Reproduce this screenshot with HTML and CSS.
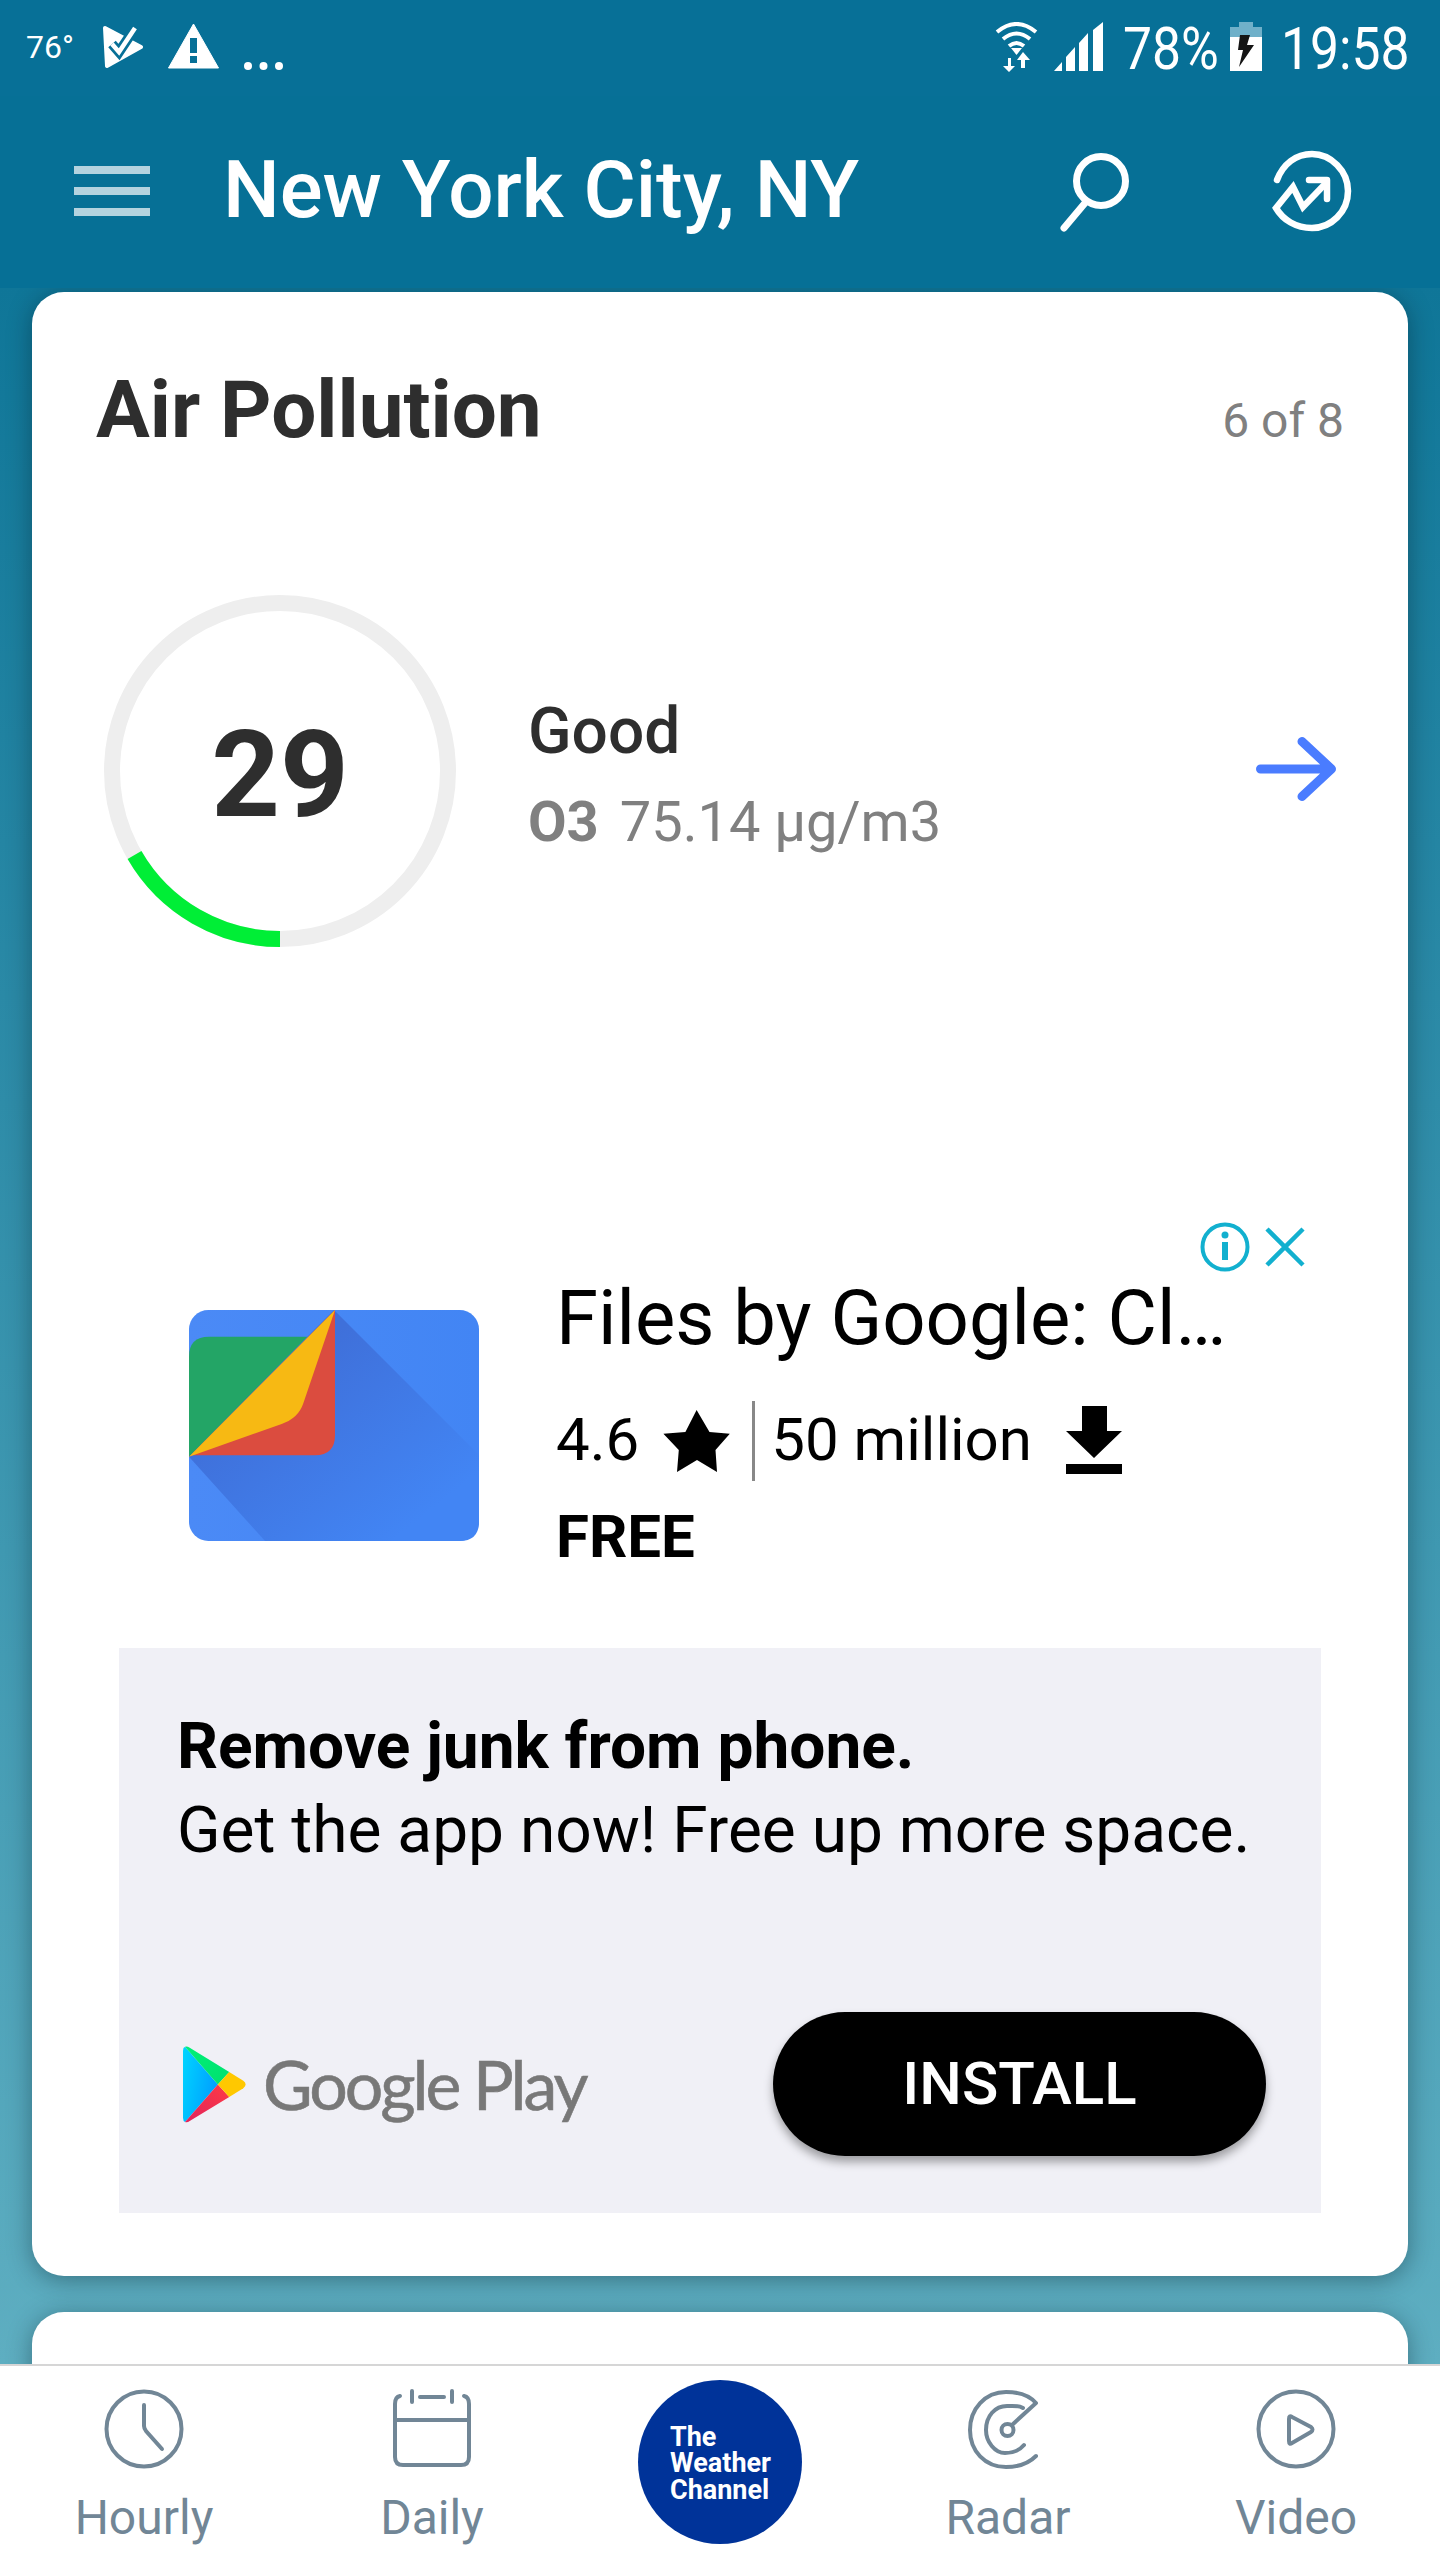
FILE: index.html
```html
<!DOCTYPE html>
<html lang="en">
<head>
<meta charset="utf-8">
<title>Air Pollution</title>
<link rel="stylesheet" href="styles.css">
</head>
<body>
<div class="app">
  <div class="statusbar">
    <div class="status-left">
      <span class="temp">76°</span>
      <svg class="ic-check" viewBox="103 24 41 46"><path d="M105 28 L141 47 L107 66 Z" fill="#fff" stroke="#fff" stroke-width="4" stroke-linejoin="round"/><path d="M112 44 L119 52 L135 28" fill="none" stroke="#077097" stroke-width="10"/><path d="M112 44 L119 52 L135 28" fill="none" stroke="#fff" stroke-width="4.500"/></svg>
      <svg class="ic-warn" viewBox="168 24 51 45"><path d="M193.500 24 L218.500 68 H168.500 Z" fill="#fff" stroke="#fff" stroke-width="1" stroke-linejoin="round"/><rect x="190" y="38" width="7" height="15" fill="#077097"/><rect x="190" y="56" width="7" height="7" fill="#077097"/></svg>
      <svg class="ic-dots" viewBox="242 60 42 12"><circle cx="247" cy="66" r="4" fill="#fff"/><circle cx="262.500" cy="66" r="4" fill="#fff"/><circle cx="278" cy="66" r="4" fill="#fff"/></svg>
    </div>
    <div class="status-right">
      <svg class="ic-wifi" viewBox="993 22 44 50"><g fill="none" stroke="#fff" stroke-width="4"><path d="M995 32 Q1014.500 16 1034 32"/><path d="M1001 39 Q1014.500 28 1028 39"/><path d="M1007 46 Q1014.500 40 1022 46"/></g><path d="M1014.500 55 L1009 48 H1020 Z" fill="#fff"/><path d="M1006 58 V66 H1001 L1007 72 L1013 66 H1009 V58 Z M1021 52 L1015 60 H1019 V68 H1023 V60 H1028 Z" fill="#fff"/></svg>
      <svg class="ic-signal" viewBox="1052 22 49 49"><path d="M1052 71 L1060 62 V71 Z M1064 71 V57 L1073 47 V71 Z M1077 71 V43 L1086 33 V71 Z M1091 71 V30 L1101 22 V71 Z" fill="#fff"/></svg>
      <span class="status-num pct">78%</span>
      <svg class="ic-batt" viewBox="1230 22 32 50"><path d="M1239 22 H1253 V27 H1262 V37 H1230 V27 H1239 Z" fill="#6fb0c9"/><rect x="1230" y="37" width="32" height="34" fill="#fff"/><path d="M1250 35 H1240 L1238 50 H1243 L1239 67 L1254 45 H1247 Z" fill="#151515"/></svg>
      <span class="status-num clock">19:58</span>
    </div>
  </div>
  <header class="topbar">
    <svg class="ic-menu" viewBox="74 165 76 52"><g fill="#b4d3df"><rect x="74" y="166" width="76" height="8"/><rect x="74" y="187" width="76" height="8"/><rect x="74" y="208" width="76" height="8"/></g></svg>
    <h1 class="city">New York City, NY</h1>
    <svg class="ic-search" viewBox="1058 150 74 84"><circle cx="1101" cy="181" r="24.500" fill="none" stroke="#fff" stroke-width="7"/><path d="M1085 203 L1064 228" fill="none" stroke="#fff" stroke-width="7" stroke-linecap="round"/></svg>
    <svg class="ic-trend" viewBox="1270 149 84 84"><path d="M1277 180 C1283 164 1296 154 1312 154 C1331 154 1348 171 1348 191 C1348 212 1331 228 1312 228 C1296 228 1283 220 1276 208 L1293 187 L1303 207 L1326 183" fill="none" stroke="#fff" stroke-width="6.500" stroke-linecap="round" stroke-linejoin="miter"/><path d="M1309 180 H1327 V199" fill="none" stroke="#fff" stroke-width="6.500" stroke-linecap="round" stroke-linejoin="round"/></svg>
  </header>
  <main class="scroller">
    <section class="card">
      <div class="card-head">
        <h2 class="card-title">Air Pollution</h2>
        <span class="card-count">6 of 8</span>
      </div>
      <div class="aqi">
        <div class="gauge">
          <svg class="gauge-ring" viewBox="0 0 352 352"><circle cx="176" cy="176" r="168" fill="none" stroke="#eeeeee" stroke-width="16"/><path d="M176 344 A168 168 0 0 1 30.500 260" fill="none" stroke="#00ee36" stroke-width="16"/></svg>
          <span class="gauge-value">29</span>
        </div>
        <div class="aqi-info">
          <div class="aqi-label">Good</div>
          <div class="aqi-detail"><b>O3</b><span>75.14 µg/m3</span></div>
        </div>
        <svg class="ic-arrow" viewBox="1256 733 86 72"><path d="M1260.500 769 H1331 M1302 741.500 L1331.500 769 L1302 796.500" fill="none" stroke="#4a7cff" stroke-width="9" stroke-linecap="round" stroke-linejoin="round"/></svg>
      </div>
      <div class="ad">
        <div class="ad-choices">
          <svg class="ic-info" viewBox="1201 1221 50 50"><circle cx="1226" cy="1246" r="22.500" fill="none" stroke="#12b0cf" stroke-width="4"/><circle cx="1226" cy="1234" r="3.500" fill="#12b0cf"/><rect x="1223" y="1241" width="6" height="18" fill="#12b0cf"/></svg>
          <svg class="ic-close" viewBox="1266 1226 40 40"><path d="M1268 1228 L1304 1264 M1304 1228 L1268 1264" fill="none" stroke="#12b0cf" stroke-width="4.500"/></svg>
        </div>
        <div class="ad-app">
          <svg class="app-icon" viewBox="117 330 870 693">
            <defs>
              <linearGradient id="sheet" x1="0" y1="0" x2="1" y2="0"><stop offset="0" stop-color="#4b8af6"/><stop offset="1" stop-color="#4285f4"/></linearGradient>
              <linearGradient id="fold" x1="0" y1="0" x2="1" y2="1"><stop offset="0.300" stop-color="#3f70da"/><stop offset="0.850" stop-color="#4285f4"/></linearGradient>
            </defs>
            <rect x="117" y="330" width="870" height="693" rx="58" fill="url(#sheet)"/>
            <path d="M552 330 L987 765 V965 Q987 1023 929 1023 H345 L117 770 V765 L552 330 Z" fill="url(#fold)"/>
            <path d="M117 770 V470 Q117 410 177 410 H472 Z" fill="#23a566"/>
            <path d="M117 770 L555 330 V706 Q555 766 495 766 H120 Z" fill="#db4c3f"/>
            <path d="M117 770 L555 330 L460 610 Q445 655 395 672 Z" fill="#f7b913"/>
          </svg>
          <div class="app-info">
            <div class="app-name">Files by Google: Cl…</div>
            <div class="app-stats">
              <span>4.6</span>
              <svg class="ic-star" viewBox="661 1406 69 65"><path d="M695.600 1407 L708.500 1429 L728.800 1430.700 L714.500 1447 L716 1469 L696 1457 L676 1469 L677.800 1447 L662.400 1430.700 L684.400 1429 Z" fill="#000"/></svg>
              <i class="stat-rule"></i>
              <span>50 million</span>
              <svg class="ic-download" viewBox="1066 1405 56 68"><path d="M1082 1405 H1107 V1430 H1122 L1094 1457 L1066 1430 H1082 Z M1066 1463 H1122 V1473 H1066 Z" fill="#000"/></svg>
            </div>
            <div class="app-price">FREE</div>
          </div>
        </div>
        <div class="ad-panel">
          <p class="ad-copy"><b>Remove junk from phone.</b><br>Get the app now! Free up more space.</p>
          <div class="ad-actions">
            <div class="gplay">
              <svg class="gplay-mark" viewBox="98 190 188 230">
                <defs>
                  <linearGradient id="gp1" x1="0" y1="0" x2="1" y2="0.400"><stop offset="0" stop-color="#00d6ff"/><stop offset="1" stop-color="#00a0ff"/></linearGradient>
                  <linearGradient id="gp2" x1="0" y1="0" x2="1" y2="1"><stop offset="0" stop-color="#00f076"/><stop offset="1" stop-color="#00e070"/></linearGradient>
                  <linearGradient id="gp3" x1="1" y1="0" x2="0" y2="1"><stop offset="0" stop-color="#ff3a44"/><stop offset="1" stop-color="#e0245e"/></linearGradient>
                </defs>
                <path d="M104 192 Q98 194 98 204 V405 Q98 414 104 417 L202 305 Z" fill="url(#gp1)"/>
                <path d="M104 192 Q110 190 118 195 L236 268 L202 305 Z" fill="url(#gp2)"/>
                <path d="M104 417 Q110 420 118 414 L236 342 L202 305 Z" fill="url(#gp3)"/>
                <path d="M236 268 L278 294 Q292 305 278 316 L236 342 L202 305 Z" fill="#ffc800"/>
              </svg>
              <span class="gplay-name">Google Play</span>
            </div>
            <button class="install">INSTALL</button>
          </div>
        </div>
      </div>
    </section>
    <section class="card card-next"></section>
  </main>
  <nav class="tabbar">
    <div class="tab">
      <svg class="tab-icon" viewBox="0 0 88 88"><circle cx="44" cy="44" r="37.500" fill="none"/><path d="M44 20 V41 Q44 43 46 46 L62 64" fill="none"/></svg>
      <span>Hourly</span>
    </div>
    <div class="tab">
      <svg class="tab-icon" viewBox="0 0 88 88"><path d="M12 11 Q7 12 7 19 V72 Q7 80 15 80 H73 Q81 80 81 72 V19 Q81 12 76 11 M7 35 H81 M24 6 V17 M64 6 V17 M32 12 H56" fill="none"/></svg>
      <span>Daily</span>
    </div>
    <div class="tab">
      <div class="twc-logo"><span>The</span><span>Weather</span><span>Channel</span></div>
    </div>
    <div class="tab">
      <svg class="tab-icon" viewBox="0 0 88 88"><path d="M72 18 C64 9 54 7 42 7 C21 7 6 24 6 45 C6 66 21 82 42 82 C54 82 65 78 72 71 M59 23 C54 20 48 21 43 21 C31 21 22 31 22 45 C22 57 31 68 41 68 C49 68 55 66 60 60 M72 18 L48 40" fill="none"/><circle cx="43.500" cy="45" r="6" fill="none"/></svg>
      <span>Radar</span>
    </div>
    <div class="tab">
      <svg class="tab-icon" viewBox="0 0 88 88"><circle cx="44" cy="44" r="37.500" fill="none"/><path d="M37 34 Q37 30 40 32 L59 42 Q62 44.500 59 47 L40 58 Q37 60 37 56 Z" fill="none" stroke-linejoin="round"/></svg>
      <span>Video</span>
    </div>
  </nav>
</div>
</body>
</html>
```

FILE: styles.css
```css
* { box-sizing: border-box; }
html, body { margin: 0; padding: 0; }
body { font-family: Roboto, "Liberation Sans", sans-serif; color: #000; }
svg { display: block; flex: none; }
.app {
  width: 1440px; height: 2560px; overflow: hidden;
  display: flex; flex-direction: column;
  background: #067096;
}

/* status bar */
.statusbar { height: 96px; flex: none; display: flex; justify-content: space-between; padding: 0 32px 0 26px; background: #077097; color: #fff; }
.status-left, .status-right { display: flex; align-items: flex-start; }
.temp { font-size: 32px; line-height: 38px; margin-top: 28px; width: 52px; }
.ic-check { width: 41px; height: 46px; margin: 24px 0 0 25px; }
.ic-warn { width: 51px; height: 45px; margin: 24px 0 0 24px; }
.ic-dots { width: 42px; height: 12px; margin: 60px 0 0 24px; }
.ic-wifi { width: 44px; height: 50px; margin-top: 22px; }
.ic-signal { width: 49px; height: 49px; margin: 22px 0 0 15px; }
.status-num { display: block; font-size: 60px; line-height: 70px; margin-top: 14px; transform: scaleX(.86); transform-origin: left; }
.pct { width: 95px; margin-left: 20px; }
.clock { width: 127px; margin-left: 19px; }
.ic-batt { width: 32px; height: 50px; margin: 22px 0 0 12px; }

/* app bar */
.topbar { height: 192px; flex: none; display: flex; align-items: flex-start; padding-left: 74px; color: #fff; }
.ic-menu { width: 76px; height: 52px; margin-top: 69px; }
.city { margin: 47px 0 0 73px; width: 835px; font-size: 80px; line-height: 94px; font-weight: 500; white-space: nowrap; }
.ic-search { width: 74px; height: 84px; margin-top: 54px; }
.ic-trend { width: 84px; height: 84px; margin: 53px 0 0 138px; }

/* cards */
.scroller { flex: 1; min-height: 0; overflow: hidden; padding: 4px 32px 0; background: linear-gradient(#0f7698, #5eaec1); }
.card { height: 1984px; background: #fff; border-radius: 32px; box-shadow: 0 4px 24px rgba(0,20,30,.38); }
.card-next { margin-top: 36px; }
.card-head { display: flex; justify-content: space-between; align-items: baseline; padding: 73px 64px 0; }
.card-title { margin: 0; font-size: 80px; line-height: 90px; font-weight: 700; color: #2e2e2e; }
.card-count { font-size: 48px; color: #808080; }

.aqi { display: flex; align-items: center; margin-top: 140px; padding-left: 72px; height: 352px; }
.gauge { position: relative; width: 352px; height: 352px; flex: none; display: flex; align-items: center; justify-content: center; }
.gauge-ring { position: absolute; inset: 0; width: 352px; height: 352px; }
.gauge-value { position: relative; margin-top: 8px; font-size: 120px; line-height: 1; font-weight: 700; color: #2e2e2e; }
.aqi-info { margin-left: 72px; width: 728px; margin-top: 9px; }
.aqi-label { font-size: 64px; line-height: 70px; font-weight: 500; color: #2e2e2e; }
.aqi-detail { display: flex; gap: 21px; margin-top: 23px; font-size: 56px; line-height: 64px; color: #808080; }
.aqi-detail b { font-weight: 700; }
.ic-arrow { width: 86px; height: 72px; margin-top: -4px; }

/* ad */
.ad { position: relative; margin: 0 87px; }
.ad-choices { position: absolute; top: 275px; right: 16px; display: flex; gap: 15px; align-items: center; }
.ic-info { width: 50px; height: 50px; }
.ic-close { width: 40px; height: 40px; }
.ad-app { display: flex; align-items: flex-start; padding: 363px 0 0 70px; }
.app-icon { width: 290px; height: 231px; }
.app-info { margin-left: 77px; margin-top: -35px; }
.app-name { font-size: 76px; line-height: 87px; white-space: nowrap; }
.app-stats { display: flex; align-items: flex-start; margin-top: 44px; font-size: 60px; line-height: 68px; white-space: nowrap; }
.ic-star { width: 69px; height: 65px; margin: 3px 0 0 23px; }
.stat-rule { width: 3px; height: 80px; margin: -5px 16px 0 21px; background: #888; }
.ic-download { width: 56px; height: 68px; margin-left: 34px; }
.app-price { margin-top: 22px; font-size: 60px; line-height: 68px; font-weight: 700; }
.ad-panel { margin-top: 77px; height: 565px; padding: 0 55px 0 58px; background: #f0f0f6; display: flex; flex-direction: column; }
.ad-copy { margin: 57px 0 0; font-size: 64px; line-height: 84px; white-space: nowrap; }
.ad-actions { display: flex; justify-content: space-between; align-items: center; margin-top: 139px; }
.gplay { display: flex; align-items: center; margin-left: 6px; }
.gplay-mark { width: 63px; height: 77px; }
.gplay-name { margin-left: 17px; font-family: Lato, sans-serif; font-size: 68px; line-height: 80px; color: #787878; letter-spacing: -3px; -webkit-text-stroke: .6px #787878; }
.install { width: 493px; height: 144px; border: 0; border-radius: 72px; background: #000; color: #fff; font: 500 60px/1 Roboto, sans-serif; box-shadow: 0 6px 10px rgba(0,0,0,.35); padding: 0; }

/* tab bar */
.tabbar { height: 196px; flex: none; display: grid; grid-template-columns: repeat(5, 288px); background: #fff; border-top: 2px solid #d6d6d6; color: #718696; }
.tab { display: flex; flex-direction: column; align-items: center; font-size: 48px; line-height: 56px; padding-top: 19px; }
.tab-icon { width: 88px; height: 88px; margin-bottom: 17px; stroke: #718696; stroke-width: 4; stroke-linecap: round; }
.twc-logo { width: 164px; height: 164px; margin-top: -5px; padding: 3px 0 0 32px; border-radius: 50%; background: #003399; color: #fff; display: flex; flex-direction: column; justify-content: center; font-weight: 700; font-size: 27px; line-height: 26.500px; }
```
